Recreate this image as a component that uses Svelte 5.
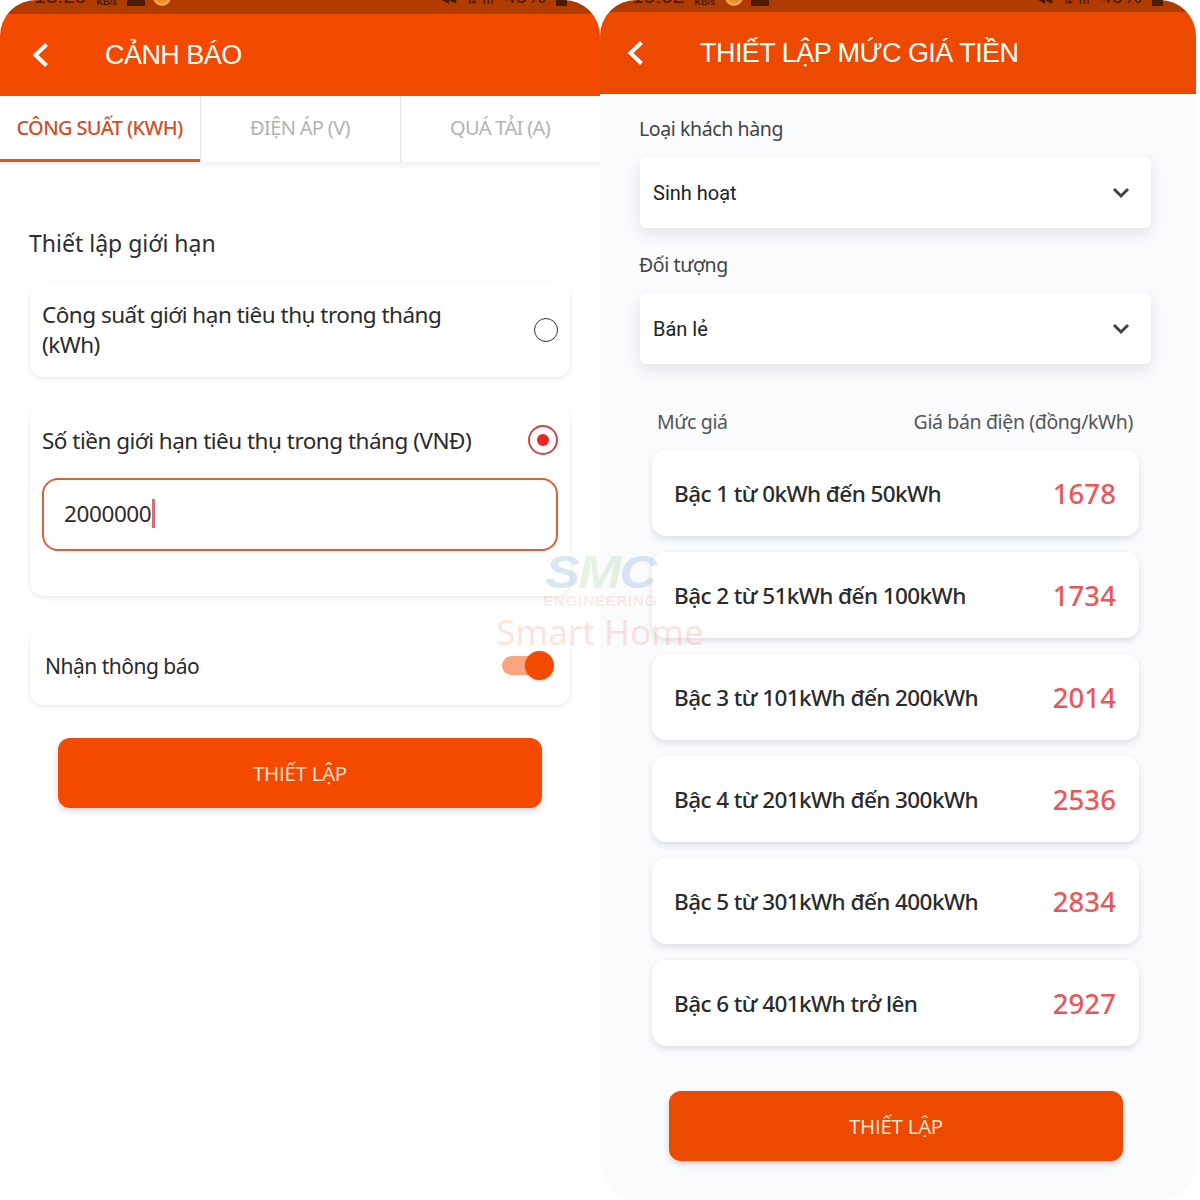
<script>
  const tabs = [
    { label: 'CÔNG SUẤT (KWH)', active: true },
    { label: 'ĐIỆN ÁP (V)', active: false },
    { label: 'QUÁ TẢI (A)', active: false }
  ];

  const tiers = [
    { name: 'Bậc 1 từ 0kWh đến 50kWh', price: 1678 },
    { name: 'Bậc 2 từ 51kWh đến 100kWh', price: 1734 },
    { name: 'Bậc 3 từ 101kWh đến 200kWh', price: 2014 },
    { name: 'Bậc 4 từ 201kWh đến 300kWh', price: 2536 },
    { name: 'Bậc 5 từ 301kWh đến 400kWh', price: 2834 },
    { name: 'Bậc 6 từ 401kWh trở lên', price: 2927 }
  ];

  const selects = [
    { label: 'Loại khách hàng', value: 'Sinh hoạt' },
    { label: 'Đối tượng', value: 'Bán lẻ' }
  ];
</script>

{#snippet backIcon()}
  <svg class="back" width="18" height="26" viewBox="0 0 18 26" aria-hidden="true">
    <path d="M14.5 2.5 L3.5 13 L14.5 23.5" fill="none" stroke="#fff" stroke-width="4" />
  </svg>
{/snippet}

<div class="page">
  <!-- Left phone: alert settings -->
  <section class="phone left">
    <div class="status">
      <div class="status-group">
        <span class="time">18:20</span>
        <span class="kbs">KB/s</span>
        <span class="chip"></span>
        <span class="dot"></span>
      </div>
      <div class="status-group right-group">
        <span class="sig">◂◂</span>
        <span class="sig">⇅ ıll</span>
        <span class="time">49%</span>
        <span class="chip small"></span>
      </div>
    </div>
    <header class="bar">
      {@render backIcon()}
      <h1>CẢNH BÁO</h1>
    </header>

    <nav class="tabs">
      {#each tabs as tab}
        <div class="tab" class:active={tab.active}>{tab.label}</div>
      {/each}
    </nav>

    <main class="alert-body">
      <h2>Thiết lập giới hạn</h2>

      <div class="card option">
        <span class="option-text">Công suất giới hạn tiêu thụ trong tháng (kWh)</span>
        <span class="radio"></span>
      </div>

      <div class="card money">
        <div class="money-head">
          <span class="option-text">Số tiền giới hạn tiêu thụ trong tháng (VNĐ)</span>
          <span class="radio on"><span></span></span>
        </div>
        <div class="field"><span>2000000</span><i class="caret"></i></div>
      </div>

      <div class="card notify">
        <span class="option-text">Nhận thông báo</span>
        <span class="switch"><span></span></span>
      </div>

      <button class="cta wide-left">THIẾT LẬP</button>
    </main>
  </section>

  <!-- Right phone: price tiers -->
  <section class="phone right">
    <div class="status thin">
      <div class="status-group">
        <span class="time">19:02</span>
        <span class="kbs">KB/s</span>
        <span class="dot"></span>
        <span class="chip"></span>
      </div>
      <div class="status-group right-group">
        <span class="sig">◂◂</span>
        <span class="sig">⇅ ıll</span>
        <span class="time">49%</span>
        <span class="chip small"></span>
      </div>
    </div>
    <header class="bar">
      {@render backIcon()}
      <h1>THIẾT LẬP MỨC GIÁ TIỀN</h1>
    </header>

    <main class="price-body">
      {#each selects as s}
        <div class="select-label">{s.label}</div>
        <div class="select">
          <span>{s.value}</span>
          <svg width="20" height="14" viewBox="0 0 20 14" aria-hidden="true">
            <path d="M3 3 L10 10 L17 3" fill="none" stroke="#444" stroke-width="3" />
          </svg>
        </div>
      {/each}

      <div class="tier-head">
        <span>Mức giá</span>
        <span>Giá bán điện (đồng/kWh)</span>
      </div>

      <div class="tiers">
        {#each tiers as t}
          <div class="tier">
            <span class="tier-name">{t.name}</span>
            <span class="tier-price">{t.price}</span>
          </div>
        {/each}
      </div>

      <button class="cta wide-right">THIẾT LẬP</button>
    </main>
  </section>

  <!-- Watermark sits above both phones -->
  <div class="watermark" aria-hidden="true">
    <div class="wm-logo"><span class="b">S</span><span class="g">M</span><span class="b">C</span></div>
    <div class="wm-eng">ENGINEERING</div>
    <div class="wm-home">Smart Home</div>
  </div>
</div>

<style>
  :global(body) {
    margin: 0;
    background: #fff;
  }

  .page {
    position: relative;
    display: flex;
    width: 1200px;
    height: 1200px;
    overflow: hidden;
    font-family: "Noto Sans", "Open Sans", sans-serif;
    color: #2b2b2b;
  }

  .phone {
    display: flex;
    flex-direction: column;
    flex: none;
    height: 1200px;
    overflow: hidden;
    border-radius: 36px 36px 0 0;
  }

  .left {
    width: 600px;
    background: #fff;
  }

  .right {
    width: 596px;
    background: #fafbfd;
    border-radius: 36px;
  }

  /* status bar is cropped by the top of the picture */
  .status {
    display: flex;
    justify-content: space-between;
    height: 14px;
    flex: none;
    padding: 0 33px 0 34px;
    overflow: hidden;
    background: #b23b00;
    color: #4a1800;
  }

  .status.thin {
    height: 12px;
    padding-left: 32px;
  }

  .status-group {
    display: flex;
    align-items: flex-end;
    gap: 8px;
    height: 6px;
  }

  .right-group {
    gap: 10px;
  }

  .time {
    font: 21px/20px "Liberation Sans", sans-serif;
  }

  .kbs {
    font: bold 9px/9px "Liberation Sans", sans-serif;
    margin-bottom: -1px;
    margin-left: 2px;
    margin-right: 2px;
  }

  .sig {
    font: 14px/14px "DejaVu Sans", sans-serif;
  }

  .chip {
    display: block;
    width: 18px;
    height: 12px;
    background: #4a1a02;
  }

  .chip.small {
    width: 11px;
  }

  .dot {
    display: block;
    width: 18px;
    height: 18px;
    border-radius: 50%;
    background: #ee8a2c;
    box-sizing: border-box;
    border: 3px solid #f5a24c;
  }

  .bar {
    display: flex;
    align-items: center;
    flex: none;
    height: 82px;
    background: #f44a00;
    color: #fff;
  }

  .back {
    margin-left: 32px;
    flex: none;
  }

  .bar h1 {
    margin: 0 0 0 55px;
    font: 400 27px/1 "Liberation Sans", Arial, sans-serif;
    letter-spacing: -0.55px;
  }

  .right .bar {
    background: #ec4a00;
  }

  .right .back {
    margin-left: 27px;
  }

  .tabs {
    display: flex;
    flex: none;
    height: 66px;
    box-shadow: 0 3px 5px rgba(40, 50, 70, 0.08);
  }

  .tab {
    flex: none;
    width: 200px;
    display: flex;
    align-items: center;
    justify-content: center;
    box-sizing: border-box;
    border-left: 1px solid #e6e6e6;
    font-size: 20px;
    letter-spacing: -0.65px;
    color: #b3b3b3;
    padding: 0 1px 4px 0;
  }

  .tab.active {
    border-left: 0;
    border-bottom: 3px solid #e0552a;
    color: #d0502a;
    font-weight: 500;
    padding: 0 1px 0 0;
  }

  .alert-body {
    display: flex;
    flex-direction: column;
    padding: 65px 30px 0;
  }

  h2 {
    margin: 0 0 22px -1px;
    font: 400 23px/33px "Noto Sans", sans-serif;
    color: #2e2e2e;
  }

  .card {
    box-sizing: border-box;
    background: #fff;
    border-radius: 14px;
    box-shadow: 0 2px 5px rgba(40, 50, 70, 0.1);
    padding: 0 12px;
  }

  .option-text {
    font-size: 22.5px;
    line-height: 30px;
    letter-spacing: -0.5px;
    color: #2a2a2a;
  }

  .option {
    display: flex;
    align-items: center;
    justify-content: space-between;
    height: 95px;
    margin-bottom: 30px;
  }

  .option .option-text {
    width: 430px;
    padding-top: 1px;
  }

  .radio {
    display: block;
    flex: none;
    box-sizing: border-box;
    width: 24px;
    height: 24px;
    border: 1.6px solid #333;
    border-radius: 50%;
  }

  .radio.on {
    display: flex;
    align-items: center;
    justify-content: center;
    width: 30px;
    height: 30px;
    border: 2px solid #c94a4a;
  }

  .radio.on span {
    width: 12px;
    height: 12px;
    border-radius: 50%;
    background: #ef2323;
  }

  .money {
    height: 189px;
    margin-bottom: 31px;
    padding-top: 18px;
  }

  .money-head {
    display: flex;
    justify-content: space-between;
    align-items: center;
    height: 30px;
    margin-bottom: 23px;
  }

  .money-head .option-text {
    padding-top: 1px;
  }

  .field {
    display: flex;
    align-items: center;
    box-sizing: border-box;
    height: 73px;
    padding: 0 0 3px 20px;
    border: 2px solid #d9603c;
    border-radius: 16px;
    font-size: 22.5px;
    letter-spacing: -0.4px;
    color: #2b2b2b;
  }

  .caret {
    display: block;
    width: 2.5px;
    height: 29px;
    margin-left: 1px;
    background: #dd6a70;
  }

  .notify {
    display: flex;
    align-items: center;
    justify-content: space-between;
    height: 78px;
    margin-bottom: 33px;
    padding: 0 19px 0 15px;
  }

  .notify .option-text {
    font-size: 21px;
    letter-spacing: -0.5px;
  }

  .switch {
    position: relative;
    display: block;
    width: 49px;
    height: 19px;
    margin-top: -1px;
    border-radius: 10px;
    background: #fca583;
  }

  .switch span {
    position: absolute;
    right: -3px;
    top: -5px;
    width: 29px;
    height: 29px;
    border-radius: 50%;
    background: #f44a00;
    box-shadow: 0 1px 3px rgba(0, 0, 0, 0.2);
  }

  .cta {
    display: block;
    border: 0;
    padding: 0;
    background: #f44a00;
    color: #fde6d8;
    border-radius: 12px;
    font: 400 20.5px/1 "Open Sans", "Noto Sans", sans-serif;
    letter-spacing: -0.25px;
    box-shadow: 0 3px 6px rgba(40, 50, 70, 0.2);
  }

  .wide-left {
    width: 484px;
    height: 70px;
    margin-left: 28px;
  }

  .wide-right {
    width: 454px;
    height: 70px;
    margin: 45px 0 0 29px;
    background: #ec4a00;
  }

  .price-body {
    display: flex;
    flex-direction: column;
    padding: 20px 0 0 40px;
  }

  .select-label {
    margin-left: -1px;
    font-size: 19.5px;
    line-height: 30px;
    letter-spacing: -0.4px;
    color: #444;
  }

  .select {
    display: flex;
    align-items: center;
    justify-content: space-between;
    box-sizing: border-box;
    width: 511px;
    height: 71px;
    margin: 13px 0 22px;
    padding: 0 20px 0 13px;
    background: #fff;
    border-radius: 6px;
    box-shadow: 0 6px 14px rgba(40, 50, 70, 0.12);
    font: 400 20px/1 Roboto, sans-serif;
    color: #222;
  }

  .tier-head {
    display: flex;
    justify-content: space-between;
    width: 476px;
    margin: 21px 0 13px 17px;
    font-size: 19.5px;
    line-height: 30px;
    letter-spacing: -0.37px;
    color: #555;
  }

  .tiers {
    display: flex;
    flex-direction: column;
    gap: 16px;
    margin-left: 12px;
    width: 487px;
  }

  .tier {
    display: flex;
    align-items: center;
    justify-content: space-between;
    box-sizing: border-box;
    height: 86px;
    padding: 0 23px 0 22px;
    background: #fff;
    border-radius: 14px;
    box-shadow: 0 3px 6px rgba(40, 50, 70, 0.14);
  }

  .tier-name {
    font-size: 22.5px;
    font-weight: 500;
    letter-spacing: -0.58px;
    color: #2b2b2b;
  }

  .tier-price {
    font-size: 27.5px;
    font-weight: 500;
    letter-spacing: 0.1px;
    color: #e8575a;
  }

  .watermark {
    position: absolute;
    left: 497px;
    top: 552px;
    width: 206px;
    display: flex;
    flex-direction: column;
    align-items: center;
    pointer-events: none;
  }

  .wm-logo {
    font: italic 900 46px/40px "Liberation Sans", sans-serif;
    letter-spacing: -2px;
    opacity: 0.28;
    transform: scaleX(1.14);
  }

  .wm-logo .b {
    color: #7fa8d8;
  }

  .wm-logo .g {
    color: #a6d59a;
  }

  .wm-eng {
    font: 700 15.5px/18px "Liberation Sans", sans-serif;
    letter-spacing: 0.5px;
    color: rgba(240, 130, 90, 0.18);
  }

  .wm-home {
    margin-top: 1px;
    font: 400 35px/42px "Noto Sans", sans-serif;
    color: rgba(240, 130, 90, 0.22);
    white-space: nowrap;
  }
</style>
